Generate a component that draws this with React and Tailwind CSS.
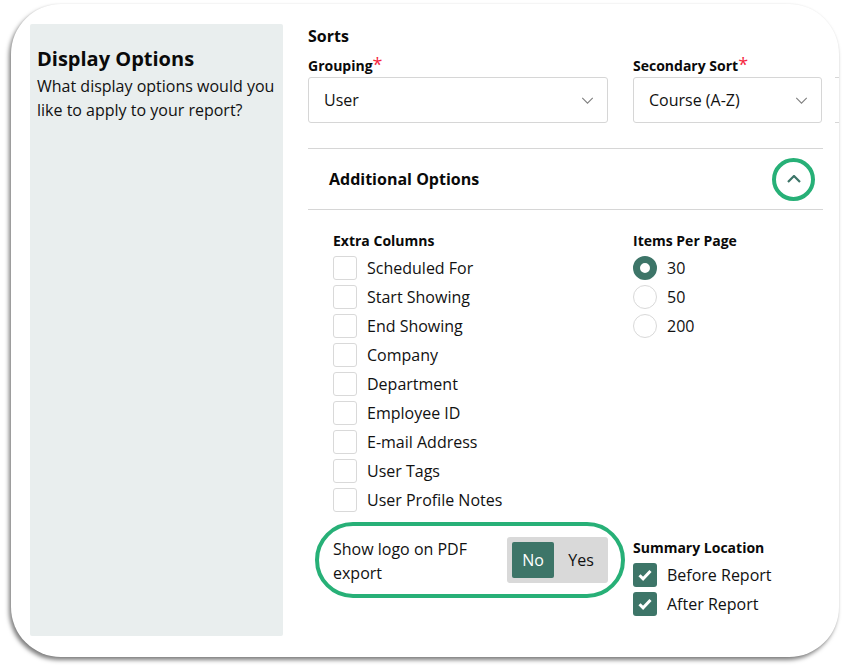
import React from "react";

function Chevron({ up, className, width = 1.3 }) {
  return (
    <svg viewBox="0 0 14 8" className={className} fill="none" stroke="currentColor" strokeWidth={width}>
      <path d={up ? "M1 7l6-6 6 6" : "M1 1l6 6 6-6"} />
    </svg>
  );
}

function Select({ label, value, width }) {
  return (
    <div className={`flex flex-col shrink-0 ${width}`}>
      <div className="h-[23px] flex items-center text-[14px] font-bold leading-[20px] text-[#0a0a0a] whitespace-nowrap">
        {label}
        <span className="text-[#f5263f] font-normal text-[18px] leading-[18px] -mt-[3px]">*</span>
      </div>
      <div className="h-[46px] border border-[#d6d6d6] rounded-[3px] pl-[15px] pr-[13px] flex items-center justify-between text-[16px] text-[#111]">
        <span>{value}</span>
        <Chevron className="w-[13px] h-[7px] text-[#808080]" />
      </div>
    </div>
  );
}

function Check({ label, checked }) {
  return (
    <div className="h-[24px] flex items-center gap-[10px] text-[16px] text-[#111]">
      {checked ? (
        <span className="w-[24px] h-[24px] rounded-[3px] bg-[#3d7568] flex items-center justify-center shrink-0">
          <svg viewBox="0 0 14 12" className="w-[14px] h-[12px]" fill="none" stroke="#fff" strokeWidth="3">
            <path d="M1.5 6.2l3.6 3.6L12.5 2" />
          </svg>
        </span>
      ) : (
        <span className="w-[24px] h-[24px] rounded-[3px] border border-[#d9d9d9] bg-white shrink-0" />
      )}
      <span className="whitespace-nowrap">{label}</span>
    </div>
  );
}

function Radio({ label, checked }) {
  return (
    <div className="h-[24px] flex items-center gap-[10px] text-[16px] text-[#111]">
      {checked ? (
        <span className="w-[24px] h-[24px] rounded-full border-[7px] border-[#3d7568] bg-white shrink-0" />
      ) : (
        <span className="w-[24px] h-[24px] rounded-full border border-[#d9d9d9] bg-white shrink-0" />
      )}
      <span>{label}</span>
    </div>
  );
}

const columns = [
  "Scheduled For",
  "Start Showing",
  "End Showing",
  "Company",
  "Department",
  "Employee ID",
  "E-mail Address",
  "User Tags",
  "User Profile Notes",
];

export default function App() {
  return (
    <div className="w-[842px] h-[667px] bg-white pt-[4px] pl-[11px] overflow-hidden font-['Open_Sans',sans-serif]">
      <div className="w-[828px] h-[653px] rounded-[50px] bg-white shadow-[-2px_3px_4px_rgba(0,0,0,0.5),0_0_2px_rgba(0,0,0,0.06)] overflow-hidden flex pt-[20px] pl-[19px]">
        <aside className="w-[253px] h-[612px] shrink-0 bg-[#e9eeee] rounded-[2px] pl-[7px] pr-[4px] pt-[21px]">
          <h2 className="text-[20px] font-bold leading-[28px] text-[#0a0a0a]">Display Options</h2>
          <p className="text-[16px] leading-[24px] text-[#111] mt-[1px]">
            What display options would you like to apply to your report?
          </p>
        </aside>

        <main className="ml-[25px] w-[530px] shrink-0">
          <h3 className="h-[24px] flex items-center text-[16px] font-bold text-[#0a0a0a]">Sorts</h3>
          <div className="flex gap-[25px] mt-[6px] w-[600px]">
            <Select label="Grouping" value="User" width="w-[300px]" />
            <Select label="Secondary Sort" value="Course (A-Z)" width="w-[189px]" />
            <div className="flex flex-col w-[60px] shrink-0 -ml-[12px]">
              <div className="h-[23px]" />
              <div className="h-[46px] border-y border-[#d6d6d6]" />
            </div>
          </div>

          <div className="w-[515px] mt-[25px] h-[62px] border-y border-[#d6d6d6] flex items-center justify-between pl-[21px] pr-[8px]">
            <span className="text-[16px] font-bold text-[#0a0a0a]">Additional Options</span>
            <span className="w-[43px] h-[43px] rounded-full border-[4px] border-[#27b077] flex items-center justify-center text-[#3d7568]">
              <Chevron up width={2.2} className="w-[14px] h-[8px]" />
            </span>
          </div>

          <div className="grid grid-cols-[325px_190px] mt-[20px]">
            <div className="pl-[25px]">
              <div className="h-[20px] flex items-center text-[14px] font-bold text-[#0a0a0a]">Extra Columns</div>
              <div className="flex flex-col gap-[5px] mt-[6px]">
                {columns.map((c) => (
                  <Check key={c} label={c} />
                ))}
              </div>
            </div>
            <div>
              <div className="h-[20px] flex items-center text-[14px] font-bold text-[#0a0a0a]">Items Per Page</div>
              <div className="flex flex-col gap-[5px] mt-[6px]">
                <Radio label="30" checked />
                <Radio label="50" />
                <Radio label="200" />
              </div>
            </div>

            <div className="mt-[10px] ml-[7px] w-[310px] h-[76px] rounded-full border-[4px] border-[#27b077] flex items-center justify-between pl-[14px] pr-[13px]">
              <span className="w-[160px] text-[16px] leading-[24px] text-[#111] pt-[2px]">Show logo on PDF export</span>
              <div className="w-[101px] h-[46px] rounded-[3px] bg-[#d9d9d9] flex items-center p-[5px]">
                <span className="w-[42px] h-[36px] rounded-[2px] bg-[#3d7568] text-white text-[16px] flex items-center justify-center">No</span>
                <span className="flex-1 text-[16px] text-[#111] text-center pl-[5px]">Yes</span>
              </div>
            </div>
            <div className="mt-[25px]">
              <div className="h-[20px] flex items-center text-[14px] font-bold text-[#0a0a0a]">Summary Location</div>
              <div className="flex flex-col gap-[5px] mt-[6px]">
                <Check label="Before Report" checked />
                <Check label="After Report" checked />
              </div>
            </div>
          </div>
        </main>
      </div>
    </div>
  );
}
